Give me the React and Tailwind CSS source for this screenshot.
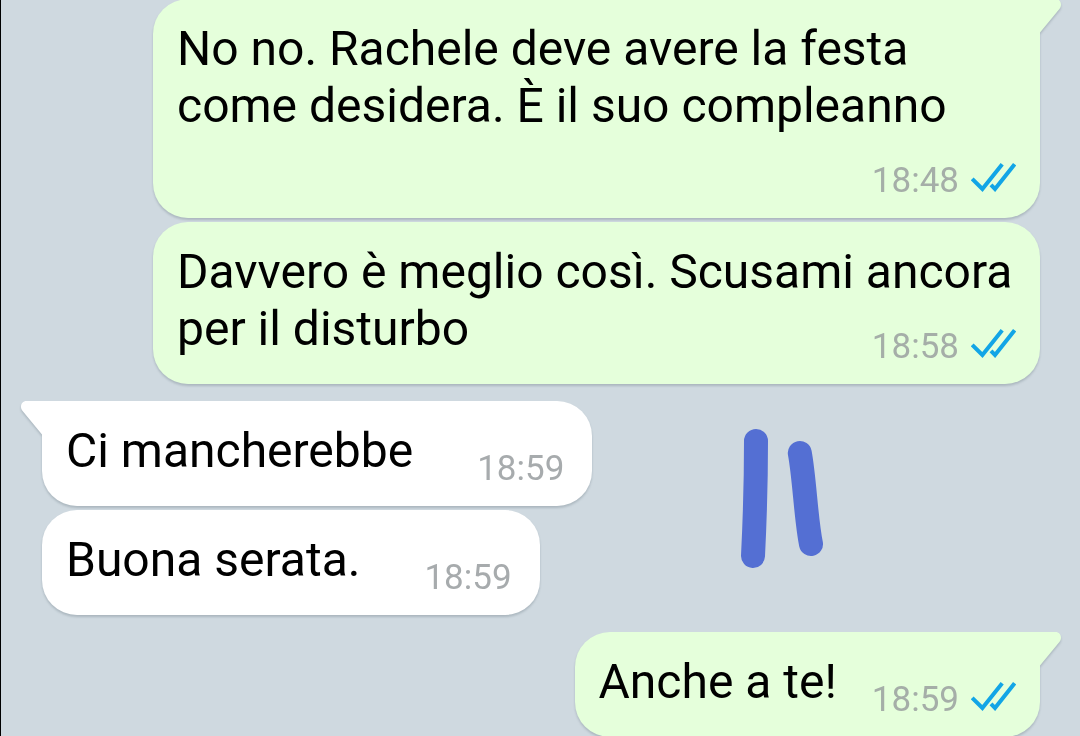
const groups = [
  {
    outgoing: true,
    messages: [
      {
        text: "No no. Rachele deve avere la festa come desidera. È il suo compleanno",
        time: "18:48",
      },
      {
        text: "Davvero è meglio così. Scusami ancora per il disturbo",
        time: "18:58",
      },
    ],
  },
  {
    outgoing: false,
    messages: [
      { text: "Ci mancherebbe", time: "18:59" },
      { text: "Buona serata.", time: "18:59" },
    ],
  },
  {
    outgoing: true,
    messages: [{ text: "Anche a te!", time: "18:59" }],
  },
];

function ReadTicks() {
  return (
    <svg
      className="ml-3 h-8 w-[45px]"
      viewBox="0 0 45 32"
      fill="none"
      stroke="#12a5e6"
      strokeWidth="4"
      role="img"
      aria-label="Letto"
    >
      <path d="M1.2 18.8 11.4 29 31.2 4.2" />
      <path d="M20 24.8 24 29 43.6 4.2" />
    </svg>
  );
}

function Tail({ outgoing }) {
  return (
    <svg
      className={
        outgoing
          ? "absolute top-0 left-full h-[34px] w-[21px] text-[#e5ffdb]"
          : "absolute top-0 right-full h-[34px] w-[21px] -scale-x-100 text-white"
      }
      viewBox="0 0 21 34"
      fill="currentColor"
      aria-hidden="true"
    >
      <path d="M0 0H15.5C19 0 21 2.6 21 5.6 21 7.4 20.6 8.6 19.6 9.8L0 33.4Z" />
    </svg>
  );
}

function Bubble({ message, outgoing, first }) {
  return (
    <article
      className={`relative flow-root rounded-[35px] pt-[21px] pb-4 pl-6 drop-shadow-[0_2px_1px_rgba(90,105,115,0.3)] ${
        outgoing ? "bg-[#e5ffdb] pr-6" : "bg-white pr-7"
      } ${first && outgoing ? "rounded-tr-none" : ""} ${
        first && !outgoing ? "rounded-tl-none" : ""
      }`}
    >
      {first ? <Tail outgoing={outgoing} /> : null}
      <p className="text-[48px] leading-[57px] text-black">
        {message.text}
        {/* Floats beside the last line, or drops below it when there is no room */}
        <span
          className={`float-right mt-[26px] flex items-start text-[35px] leading-[42px] ${
            outgoing ? "ml-[35px] text-[#a5aea8]" : "ml-16 text-[#a7abad]"
          }`}
        >
          <time>{message.time}</time>
          {outgoing ? <ReadTicks /> : null}
        </span>
      </p>
    </article>
  );
}

function Scribble() {
  return (
    <svg
      className="absolute top-[428px] left-[739px] h-[142px] w-[86px]"
      viewBox="740 428 86 142"
      fill="none"
      stroke="#546fd3"
      strokeWidth="24"
      strokeLinecap="round"
      aria-hidden="true"
    >
      <path d="M756 441C756 475 754.8 520 753 556" />
      <path d="M799.8 453C804.5 478 806 520 811 544" />
    </svg>
  );
}

export default function App() {
  return (
    <main className="relative h-screen overflow-hidden border-l border-black bg-[#cfd9e0] font-[Roboto,sans-serif]">
      <div className="-mt-px flex flex-col gap-[17px] pr-10">
        {groups.map((group, i) => (
          <section
            key={i}
            className={`flex flex-col gap-1 ${
              group.outgoing ? "items-end pl-[152px]" : "items-start pl-[41px]"
            }`}
          >
            {group.messages.map((message, j) => (
              <Bubble
                key={j}
                message={message}
                outgoing={group.outgoing}
                first={j === 0}
              />
            ))}
          </section>
        ))}
      </div>
      <Scribble />
    </main>
  );
}
